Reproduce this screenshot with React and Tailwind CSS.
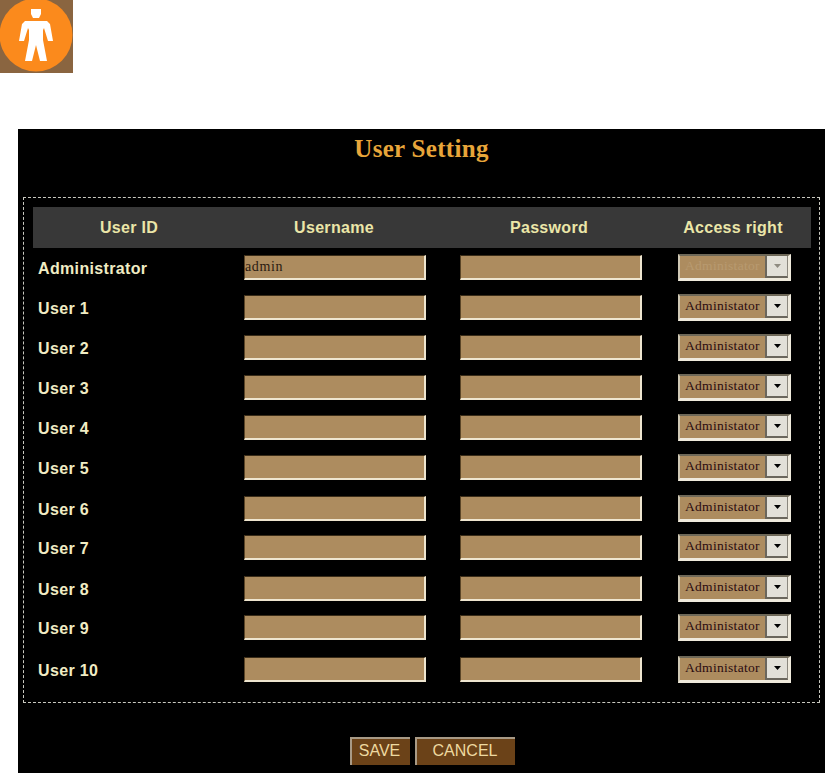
const rows = ["Administrator","User 1","User 2","User 3","User 4","User 5","User 6","User 7","User 8","User 9","User 10"];
const tops = [255,295,335,375,415,455,496,535,576,615,657];

function Field({ value }) {
  return (
    <div className="w-[182px] h-[25px] bg-[#ad8c5f] border-r-2 border-b-2 border-r-[#eee5cf] border-b-[#eee5cf] border-t border-l border-t-[#3a2c18] border-l-[#5a4527] flex items-center text-[14px] tracking-[0.6px] leading-none text-[#2a1a10] font-['Liberation_Serif',serif]">
      {value}
    </div>
  );
}

function Picker({ disabled }) {
  return (
    <div className="w-[113px] h-[27px] bg-[#ad8c5f] border-t-2 border-t-[#6e6858] border-l-2 border-l-[#cfc8b4] border-b-[3px] border-b-[#efeadc] border-r-[3px] border-r-[#efeadc] flex items-stretch -mt-[1px]">
      <div className={"flex-1 flex items-center pl-[5px] pb-[1px] overflow-hidden whitespace-nowrap text-[13.5px] tracking-[0.3px] font-['Liberation_Serif',serif] " + (disabled ? "text-[#b89a70]" : "text-[#2a0a10]")}>
        Administator
      </div>
      <div className="w-[23px] bg-[#e2e0d8] border-l-2 border-l-[#6a665c] border-b-2 border-b-[#6a665c] border-r border-r-[#8a867c] flex items-center justify-center">
        <svg width="7" height="4" viewBox="0 0 7 4"><path d="M0 0h7L3.5 4z" fill={disabled ? "#8f8b80" : "#000"} /></svg>
      </div>
    </div>
  );
}

export default function App() {
  return (
    <div className="w-[825px] h-[773px] bg-white overflow-hidden font-['Liberation_Sans',sans-serif]">
      <div className="w-[73px] h-[73px] bg-[#8a6540] overflow-hidden">
        <svg width="73" height="73" viewBox="0 0 73 73">
          <circle cx="36" cy="35" r="36.5" fill="#fb8a1c" />
          <path fill="#fff" d="M31 9h10v5l-2 4h-6l-2-4zM25 21H47L50 24L53 41H48L44 28L43 30V40L47 61H40L36 45L32 61H25L29 40V30L28 28L24 41H19L22 24Z" />
        </svg>
      </div>

      <div className="mt-[56px] ml-[18px] h-[644px] bg-black flex flex-col">
        <h1 className="h-[68px] pt-[6px] text-center text-[25px] leading-[28px] tracking-[0.3px] font-bold text-[#e8a63a] font-['Liberation_Serif',serif]">User Setting</h1>

        <div className="mx-[5px] h-[506px] border border-dashed border-[#c9c9c0] pt-[9px] pl-[9px] pr-[8px]">
          <div className="grid grid-cols-[192px_218px_212px_156px] h-[41px] items-center bg-[#383838] text-center text-[16px] tracking-[0.3px] font-bold text-[#ebe6a8]">
            <div>User ID</div>
            <div>Username</div>
            <div>Password</div>
            <div>Access right</div>
          </div>
          <div className="flex flex-col mt-[7px]">
            {rows.map((label, i) => (
              <div key={label} className={"grid grid-cols-[192px_218px_212px_156px] items-center " + (i === 10 ? "h-[25px]" : "")} style={i < 10 ? { height: tops[i + 1] - tops[i] } : undefined}>
                <div className="self-start h-[27px] flex items-center pl-[5px] text-[16px] tracking-[0.35px] font-bold text-[#f0ecc4]">{label}</div>
                <div className="self-start pl-[19px]"><Field value={i === 0 ? "admin" : ""} /></div>
                <div className="self-start pl-[17px]"><Field /></div>
                <div className="self-start pl-[23px]"><Picker disabled={i === 0} /></div>
              </div>
            ))}
          </div>
        </div>

        <div className="flex gap-[5px] mt-[34px] ml-[332px] text-[16px] text-[#eed9a0]">
          <div className="w-[60px] h-[28px] pb-[2px] pr-[3px] bg-[#6b4218] border-t-2 border-l-2 border-t-[#a89a86] border-l-[#a89a86] flex items-center justify-center">SAVE</div>
          <div className="w-[100px] h-[28px] pb-[2px] pr-[2px] bg-[#6b4218] border-t-2 border-l-2 border-t-[#a89a86] border-l-[#a89a86] flex items-center justify-center">CANCEL</div>
        </div>
      </div>
    </div>
  );
}
